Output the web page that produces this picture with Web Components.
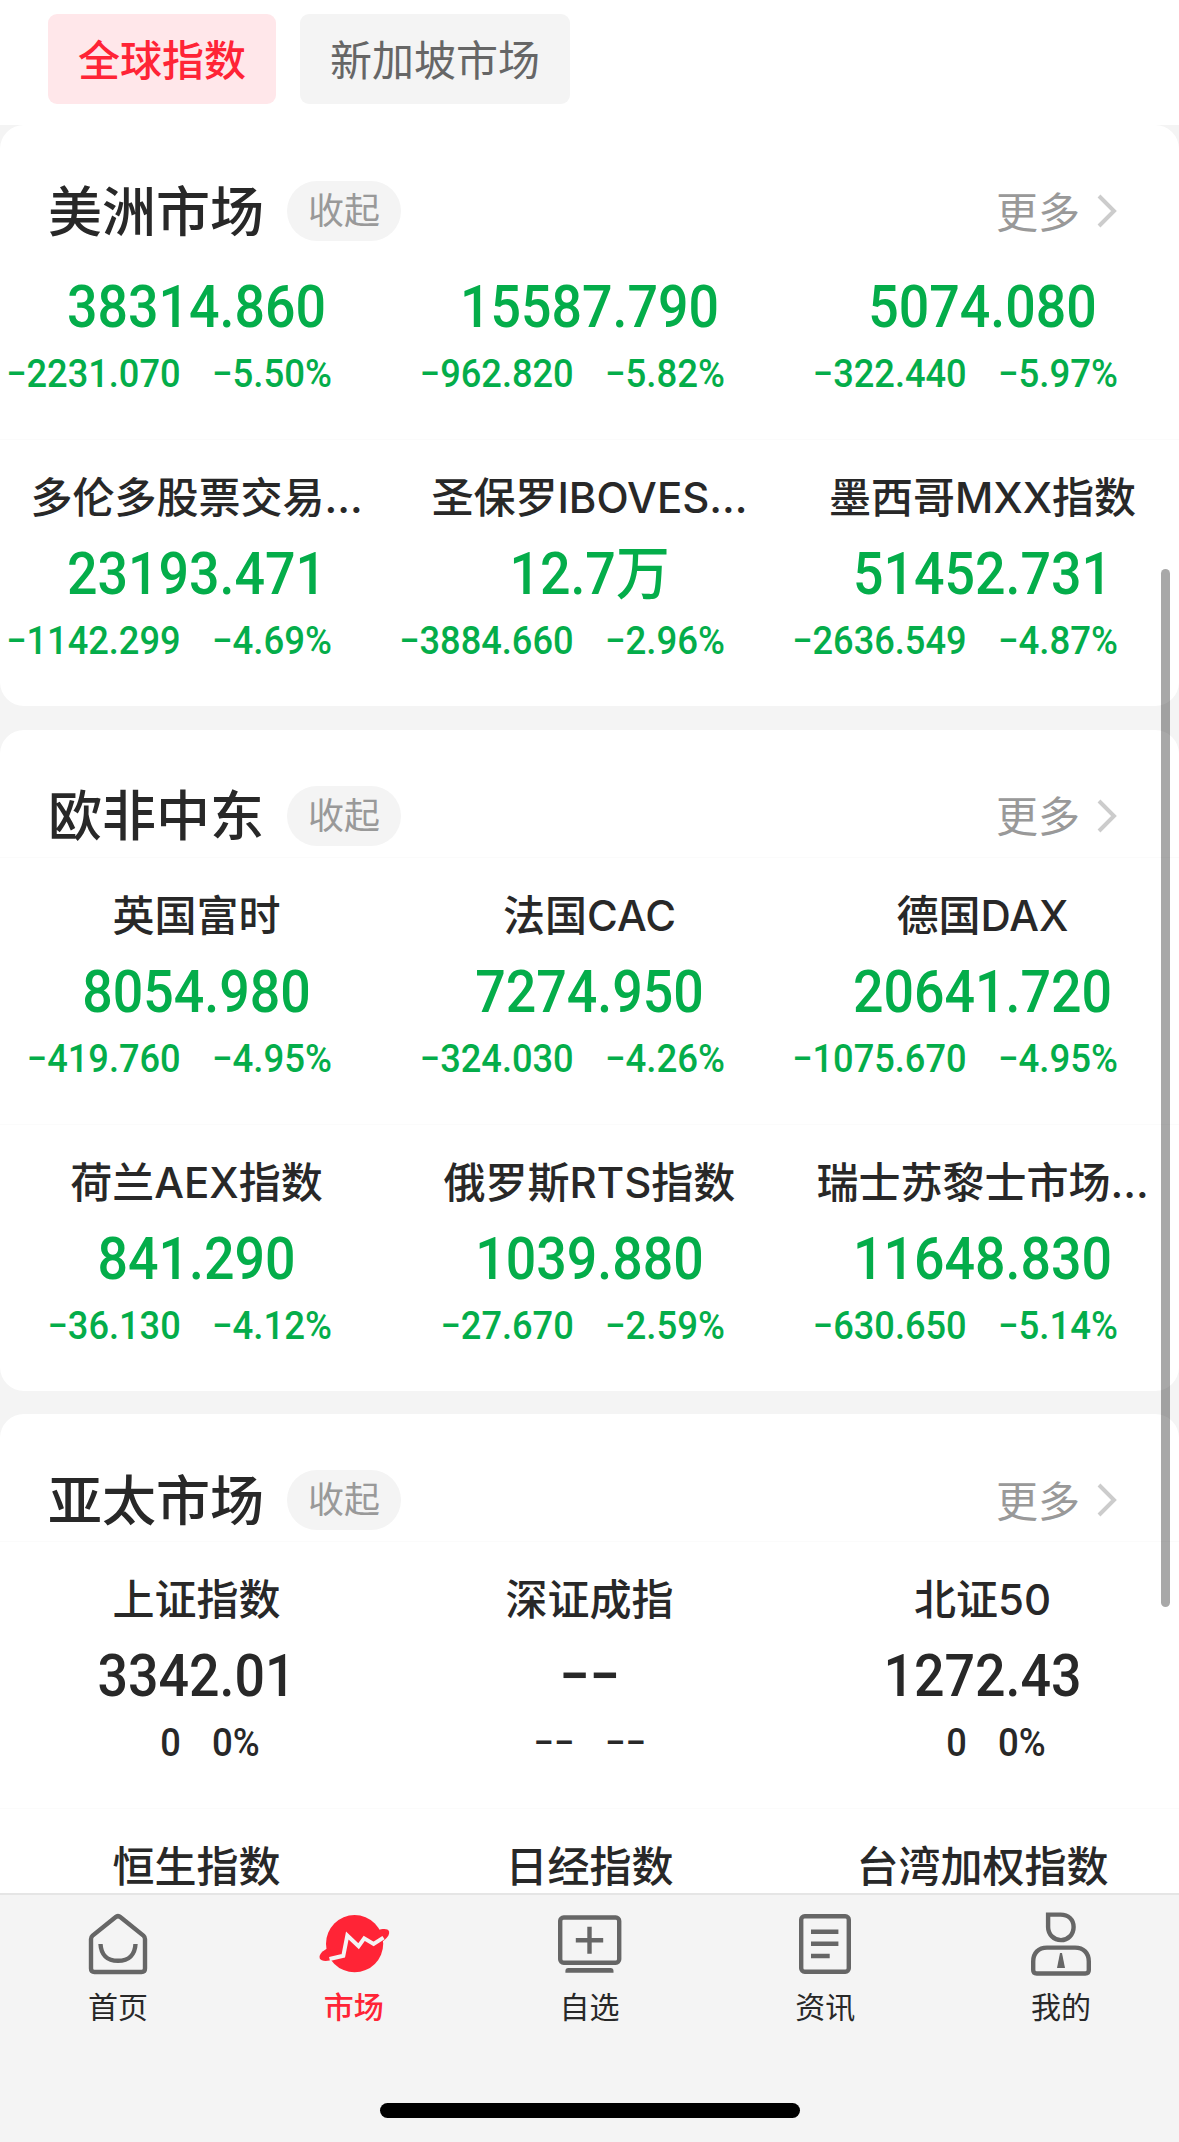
<!DOCTYPE html>
<html lang="zh-CN">
<head>
<meta charset="utf-8">
<title>全球指数</title>
<style>
html, body {
	margin: 0;
	height: 100%;
	overflow: hidden;
}
body {
	font-family: Inter, "Noto Sans CJK SC", sans-serif;
	color: #282828;
	background: #F4F4F4;
}
</style>
</head>
<body>
<market-app>
	<filter-bar slot="filters">
		<filter-chip active>全球指数</filter-chip>
		<filter-chip>新加坡市场</filter-chip>
	</filter-bar>

	<market-card>
		<span slot="title">美洲市场</span>
		<index-quote trend="down" scrolled value="38314.860" change="−2231.070" percent="−5.50%"></index-quote>
		<index-quote trend="down" scrolled value="15587.790" change="−962.820" percent="−5.82%"></index-quote>
		<index-quote trend="down" scrolled value="5074.080" change="−322.440" percent="−5.97%"></index-quote>
		<index-quote trend="down" value="23193.471" change="−1142.299" percent="−4.69%">多伦多股票交易…</index-quote>
		<index-quote trend="down" value="12.7万" change="−3884.660" percent="−2.96%">圣保罗IBOVES…</index-quote>
		<index-quote trend="down" value="51452.731" change="−2636.549" percent="−4.87%">墨西哥MXX指数</index-quote>
	</market-card>

	<market-card>
		<span slot="title">欧非中东</span>
		<index-quote trend="down" value="8054.980" change="−419.760" percent="−4.95%">英国富时</index-quote>
		<index-quote trend="down" value="7274.950" change="−324.030" percent="−4.26%">法国CAC</index-quote>
		<index-quote trend="down" value="20641.720" change="−1075.670" percent="−4.95%">德国DAX</index-quote>
		<index-quote trend="down" value="841.290" change="−36.130" percent="−4.12%">荷兰AEX指数</index-quote>
		<index-quote trend="down" value="1039.880" change="−27.670" percent="−2.59%">俄罗斯RTS指数</index-quote>
		<index-quote trend="down" value="11648.830" change="−630.650" percent="−5.14%">瑞士苏黎士市场…</index-quote>
	</market-card>

	<market-card>
		<span slot="title">亚太市场</span>
		<index-quote value="3342.01" change="0" percent="0%">上证指数</index-quote>
		<index-quote value="−−" change="−−" percent="−−">深证成指</index-quote>
		<index-quote value="1272.43" change="0" percent="0%">北证50</index-quote>
		<index-quote>恒生指数</index-quote>
		<index-quote>日经指数</index-quote>
		<index-quote>台湾加权指数</index-quote>
	</market-card>

	<tab-bar slot="tabs">
		<tab-item icon="home">首页</tab-item>
		<tab-item icon="market" active>市场</tab-item>
		<tab-item icon="watchlist">自选</tab-item>
		<tab-item icon="news">资讯</tab-item>
		<tab-item icon="mine">我的</tab-item>
	</tab-bar>
</market-app>

<script>
class MarketApp extends HTMLElement {
	constructor() {
		super();
		let shadowRoot = this.attachShadow({mode: 'open'});
		shadowRoot.innerHTML = `
		<style>
		:host {
			display: flex;
			flex-direction: column;
			width: 1179px;
			height: 2142px;
			position: relative;
			overflow: hidden;
		}
		main {
			flex: 1;
			min-height: 0;
			overflow: hidden;
			display: flex;
			flex-direction: column;
			gap: 23.5px;
		}
		.thumb {
			position: absolute;
			top: 569px;
			right: 9px;
			width: 9px;
			height: 1038px;
			border-radius: 4.5px;
			background: rgba(0, 0, 0, .34);
		}
		</style>
		<slot name="filters"></slot>
		<main><slot></slot></main>
		<slot name="tabs"></slot>
		<div class="thumb"></div>`;
	}
}
window.customElements.define('market-app', MarketApp);

class FilterBar extends HTMLElement {
	constructor() {
		super();
		let shadowRoot = this.attachShadow({mode: 'open'});
		shadowRoot.innerHTML = `
		<style>
		:host {
			display: flex;
			flex: none;
			gap: 24px;
			box-sizing: border-box;
			height: 125px;
			padding: 14px 48px 21px;
			background: #FFFFFF;
		}
		</style>
		<slot></slot>`;
	}
}
window.customElements.define('filter-bar', FilterBar);

class FilterChip extends HTMLElement {
	constructor() {
		super();
		let shadowRoot = this.attachShadow({mode: 'open'});
		shadowRoot.innerHTML = `
		<style>
		:host {
			display: block;
			height: 90px;
			line-height: 93px;
			padding: 0 30px;
			border-radius: 9px;
			font-size: 42px;
			color: #666666;
			background: #F4F4F4;
		}
		:host([active]) {
			color: #FF2436;
			background: #FFE7EA;
			font-weight: 500;
		}
		</style>
		<slot></slot>`;
	}
}
window.customElements.define('filter-chip', FilterChip);

class MarketCard extends HTMLElement {
	constructor() {
		super();
		let shadowRoot = this.attachShadow({mode: 'open'});
		shadowRoot.innerHTML = `
		<style>
		:host {
			display: block;
			flex: none;
			border-radius: 24px;
			background: #FFFFFF;
			overflow: hidden;
		}
		header {
			display: flex;
			align-items: center;
			box-sizing: border-box;
			height: 127px;
			padding: 56px 61px 11px 48px;
		}
		.title {
			font-size: 54px;
			line-height: 60px;
			padding-top: 3px;
			font-weight: 500;
		}
		.fold {
			width: 114px;
			height: 60px;
			margin-left: 23px;
			border-radius: 30px;
			background: #F4F4F4;
			color: #999999;
			font-size: 36px;
			line-height: 61px;
			text-align: center;
		}
		.more {
			margin-left: auto;
			color: #999999;
			font-size: 42px;
			line-height: 60px;
			padding-top: 3px;
		}
		svg {
			margin-left: 16px;
		}
		.grid {
			display: grid;
			grid-template-columns: repeat(3, 393px);
		}
		</style>
		<header>
			<div class="title"><slot name="title"></slot></div>
			<div class="fold">收起</div>
			<div class="more">更多</div>
			<svg width="22" height="40" viewBox="0 0 22 40" fill="none" stroke="#CCCCCC" stroke-width="4"><path d="M3 5l15 15L3 35"/></svg>
		</header>
		<div class="grid"><slot></slot></div>`;
	}
}
window.customElements.define('market-card', MarketCard);

class IndexQuote extends HTMLElement {
	constructor() {
		super();
		let shadowRoot = this.attachShadow({mode: 'open'});
		shadowRoot.innerHTML = `
		<style>
		:host {
			display: block;
			box-sizing: border-box;
			height: 267px;
			padding-top: 28px;
			border-top: 1px solid #FBFBFB;
			white-space: nowrap;
		}
		.name {
			height: 60px;
			line-height: 60px;
			font-size: 42px;
			font-weight: 500;
			text-align: center;
		}
		.value {
			margin-top: 9px;
			height: 72px;
			line-height: 74px;
			font-family: Roboto, "Noto Sans CJK SC", sans-serif;
			font-size: 58.5px;
			font-weight: 500;
			text-align: center;
			/* narrow digits */
			transform: scaleX(.918);
		}
		.delta {
			display: grid;
			grid-template-columns: 181px 1fr;
			column-gap: 31px;
			margin-top: 7px;
			height: 48px;
			line-height: 49px;
			font-family: Roboto, sans-serif;
			font-size: 38.5px;
			font-weight: 500;
		}
		.change {
			justify-self: end;
			transform: scaleX(.94);
			transform-origin: right;
		}
		.percent {
			justify-self: start;
			transform: scaleX(.95);
			transform-origin: left;
		}
		:host([trend="down"]) .value, :host([trend="down"]) .delta {
			color: #04AD4A;
		}
		/* first row, its name is tucked under the card header */
		:host([scrolled]) {
			height: 187px;
			padding-top: 9px;
			border-top: 0;
		}
		:host([scrolled]) .name {
			display: none;
		}
		</style>
		<div class="name"><slot></slot></div>
		<div class="value"></div>
		<div class="delta"><span class="change"></span><span class="percent"></span></div>`;
	}

	static get observedAttributes() {
		return ['value', 'change', 'percent'];
	}
	attributeChangedCallback(attrName, oldVal, newVal) {
		this.shadowRoot.querySelector('.' + attrName).textContent = newVal;
	}
}
window.customElements.define('index-quote', IndexQuote);

class TabBar extends HTMLElement {
	constructor() {
		super();
		let shadowRoot = this.attachShadow({mode: 'open'});
		shadowRoot.innerHTML = `
		<style>
		:host {
			display: flex;
			flex-direction: column;
			flex: none;
			box-sizing: border-box;
			height: 249px;
			border-top: 2px solid #E5E5E5;
			background: #F4F4F4;
		}
		nav {
			display: grid;
			grid-template-columns: repeat(5, 1fr);
		}
		.indicator {
			width: 420px;
			height: 15px;
			margin: auto auto 24px;
			border-radius: 7.5px;
			background: #000000;
		}
		</style>
		<nav><slot></slot></nav>
		<div class="indicator"></div>`;
	}
}
window.customElements.define('tab-bar', TabBar);

const icons = {
	home: `<path d="M33.4 6.2Q36 4 38.6 6.2L61.4 24.6Q63 26 63 28V57.500Q63 61 59.500 61H12.500Q9 61 9 57.500V28Q9 26 10.600 24.600Z"/>
		<path d="M18.500 33C19 43.500 25 49.800 36 49.800S53 43.500 53.500 33"/>`,
	market: `<g fill="#FF2436" stroke="none"><circle cx="36.600" cy="32.700" r="28.600"/>
		<path d="M8.300 38C3 41 .8 44.500 1.800 47.300C3 50.500 9 50.500 16 48.500L12 38Z"/>
		<path d="M59.500 19.500C65 17.500 70 17.500 71 20.500C71.800 23.500 69 27.500 64.500 30.500L58 27Z"/></g>
		<path stroke="#F4F4F4" stroke-width="4" d="M11.500 48L25.300 44.800L29.300 24.500L40.600 35.200L46.200 27.400L55.600 33L65.500 26.600"/>`,
	watchlist: `<rect x="7.200" y="6.500" width="59" height="45.300" rx="3.500"/>
		<path d="M22.800 29.300H50.200M36.500 15.700V42.700"/>
		<path fill="#666666" stroke="none" d="M12.400 61.700V60Q12.400 57 15.400 57H57.500Q60.500 57 60.500 60V61.700Z"/>`,
	news: `<rect x="12.200" y="5.200" width="47.600" height="55.600" rx="3.500"/>
		<path d="M22 20.700H49.400M22 32.800H49.400M22 45H40.700"/>`,
	mine: `<path d="M23.100 3.600H35.500C43.500 3.600 48.600 8.500 48.600 16C48.600 23.500 43 29.100 36 29.100S23.100 23.500 23.100 16Z"/>
		<path d="M22 36.600H50C58.500 36.600 63.800 42 63.800 50.500V59Q63.800 62.500 60.300 62.500H11.700Q8.200 62.500 8.200 59V50.500C8.200 42 13.500 36.600 22 36.600Z"/>
		<path fill="#666666" stroke="none" d="M35 42H37L40 57H32Z"/>`
};

class TabItem extends HTMLElement {
	constructor() {
		super();
		let shadowRoot = this.attachShadow({mode: 'open'});
		shadowRoot.innerHTML = `
		<style>
		:host {
			display: flex;
			flex-direction: column;
			align-items: center;
			padding-top: 16px;
			font-size: 30px;
			line-height: 40px;
		}
		:host([active]) {
			color: #FF2436;
			font-weight: 500;
		}
		svg {
			display: block;
			margin-bottom: 10px;
		}
		</style>
		<svg width="72" height="66" viewBox="0 0 72 66" fill="none" stroke="#666666" stroke-width="4.400"></svg>
		<slot></slot>`;
	}

	static get observedAttributes() {
		return ['icon'];
	}
	attributeChangedCallback(attrName, oldVal, newVal) {
		this.shadowRoot.querySelector('svg').innerHTML = icons[newVal];
	}
}
window.customElements.define('tab-item', TabItem);
</script>
</body>
</html>
